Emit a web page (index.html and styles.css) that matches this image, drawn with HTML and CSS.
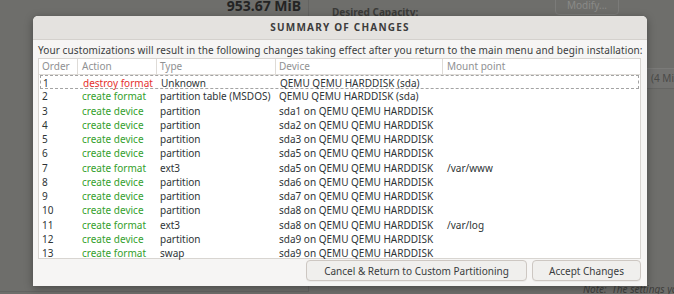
FILE: index.html
```html
<!DOCTYPE html>
<html lang="en">
<head>
  <meta charset="UTF-8">
  <title>Summary of Changes</title>
  <link rel="stylesheet" href="styles.css">
</head>
<body>
  <div class="backdrop">
    <div class="left-pane">
      <div class="capacity">953.67 MiB</div>
    </div>
    <div class="right-pane">
      <div class="top-row">
        <span class="desired">Desired Capacity:</span>
        <span class="modify">Modify...</span>
      </div>
      <div class="size-row">(4 MiB)</div>
      <div class="note">Note:&nbsp; The settings you make</div>
    </div>
  </div>

  <div class="dialog">
    <div class="dialog-title">SUMMARY OF CHANGES</div>
    <div class="dialog-body">
      <p class="intro">Your customizations will result in the following changes taking effect after you return to the main menu and begin installation:</p>
      <div class="changes">
        <div class="row head">
          <span class="c-order">Order</span>
          <span class="c-action">Action</span>
          <span class="c-type">Type</span>
          <span class="c-device">Device</span>
          <span class="c-mount">Mount point</span>
        </div>
        <div class="row focus">
          <span class="c-order">1</span>
          <span class="c-action destroy">destroy format</span>
          <span class="c-type">Unknown</span>
          <span class="c-device">QEMU QEMU HARDDISK (sda)</span>
          <span class="c-mount"></span>
        </div>
        <div class="row">
          <span class="c-order">2</span>
          <span class="c-action create">create format</span>
          <span class="c-type">partition table (MSDOS)</span>
          <span class="c-device">QEMU QEMU HARDDISK (sda)</span>
          <span class="c-mount"></span>
        </div>
        <div class="row">
          <span class="c-order">3</span>
          <span class="c-action create">create device</span>
          <span class="c-type">partition</span>
          <span class="c-device">sda1 on QEMU QEMU HARDDISK</span>
          <span class="c-mount"></span>
        </div>
        <div class="row">
          <span class="c-order">4</span>
          <span class="c-action create">create device</span>
          <span class="c-type">partition</span>
          <span class="c-device">sda2 on QEMU QEMU HARDDISK</span>
          <span class="c-mount"></span>
        </div>
        <div class="row">
          <span class="c-order">5</span>
          <span class="c-action create">create device</span>
          <span class="c-type">partition</span>
          <span class="c-device">sda3 on QEMU QEMU HARDDISK</span>
          <span class="c-mount"></span>
        </div>
        <div class="row">
          <span class="c-order">6</span>
          <span class="c-action create">create device</span>
          <span class="c-type">partition</span>
          <span class="c-device">sda5 on QEMU QEMU HARDDISK</span>
          <span class="c-mount"></span>
        </div>
        <div class="row">
          <span class="c-order">7</span>
          <span class="c-action create">create format</span>
          <span class="c-type">ext3</span>
          <span class="c-device">sda5 on QEMU QEMU HARDDISK</span>
          <span class="c-mount">/var/www</span>
        </div>
        <div class="row">
          <span class="c-order">8</span>
          <span class="c-action create">create device</span>
          <span class="c-type">partition</span>
          <span class="c-device">sda6 on QEMU QEMU HARDDISK</span>
          <span class="c-mount"></span>
        </div>
        <div class="row">
          <span class="c-order">9</span>
          <span class="c-action create">create device</span>
          <span class="c-type">partition</span>
          <span class="c-device">sda7 on QEMU QEMU HARDDISK</span>
          <span class="c-mount"></span>
        </div>
        <div class="row">
          <span class="c-order">10</span>
          <span class="c-action create">create device</span>
          <span class="c-type">partition</span>
          <span class="c-device">sda8 on QEMU QEMU HARDDISK</span>
          <span class="c-mount"></span>
        </div>
        <div class="row">
          <span class="c-order">11</span>
          <span class="c-action create">create format</span>
          <span class="c-type">ext3</span>
          <span class="c-device">sda8 on QEMU QEMU HARDDISK</span>
          <span class="c-mount">/var/log</span>
        </div>
        <div class="row">
          <span class="c-order">12</span>
          <span class="c-action create">create device</span>
          <span class="c-type">partition</span>
          <span class="c-device">sda9 on QEMU QEMU HARDDISK</span>
          <span class="c-mount"></span>
        </div>
        <div class="row">
          <span class="c-order">13</span>
          <span class="c-action create">create format</span>
          <span class="c-type">swap</span>
          <span class="c-device">sda9 on QEMU QEMU HARDDISK</span>
          <span class="c-mount"></span>
        </div>
      </div>
      <div class="buttons">
        <button class="btn-cancel">Cancel &amp; Return to Custom Partitioning</button>
        <button class="btn-accept">Accept Changes</button>
      </div>
    </div>
  </div>
</body>
</html>
```

FILE: styles.css
```css
body {
  margin: 0;
  width: 674px;
  height: 294px;
  overflow: hidden;
  background-color: #6e6e6b;
  font-family: 'Noto Sans', 'DejaVu Sans', sans-serif;
  font-size: 10px;
  color: #2e3436;
}

/* dimmed installer screen behind the dialog */
.backdrop {
  display: flex;
  height: 294px;
  color: #3a3a38;
}

.left-pane {
  width: 309px;
  border-right: 1px solid #636361;
  border-bottom: 1px solid #636361;
  height: 292px;
  box-sizing: border-box;
}

.capacity {
  text-align: right;
  padding-right: 7px;
  margin-top: -4px;
  font-size: 14px;
  font-weight: bold;
  color: #242424;
}

.right-pane {
  flex: 1;
  display: flex;
  flex-direction: column;
  overflow: hidden;
}

.top-row {
  display: flex;
  justify-content: space-between;
  padding: 0 55px 0 23px;
  height: 20px;
}

.desired {
  margin-top: 5px;
  font-weight: bold;
  font-size: 10px;
  color: #3b3b39;
}

.modify {
  margin-top: -5px;
  height: 20px;
  width: 64px;
  border: 1px solid #7b7b79;
  border-radius: 4px;
  color: #8a8a88;
  text-align: center;
  line-height: 18px;
  box-sizing: border-box;
}

.size-row {
  margin-top: 48px;
  height: 19px;
  line-height: 19px;
  padding-left: 342px;
  white-space: nowrap;
  background-color: #727270;
  border-top: 1px solid #7a7a78;
  border-bottom: 1px solid #656563;
  color: #4a4a48;
}

.note {
  margin-top: auto;
  padding-left: 274px;
  white-space: nowrap;
  font-style: italic;
  color: #3e3e3c;
  height: 10px;
  line-height: 10px;
}

/* the dialog */
.dialog {
  position: absolute;
  left: 33px;
  top: 16px;
  width: 614px;
  height: 270px;
  background-color: #f6f5f4;
  border-radius: 5px 5px 0 0;
  box-shadow: 0 2px 8px rgba(0, 0, 0, 0.35);
  display: flex;
  flex-direction: column;
}

.dialog-title {
  height: 23px;
  line-height: 23px;
  text-align: center;
  background-color: #e4e2df;
  border-bottom: 1px solid #d4d1cd;
  border-radius: 5px 5px 0 0;
  font-weight: bold;
  font-size: 10px;
  letter-spacing: 1.2px;
  color: #3c3c3c;
}

.dialog-body {
  flex: 1;
  padding: 0 6px 0 5px;
  display: flex;
  flex-direction: column;
}

.intro {
  margin: 2px 0 0 0;
  height: 16px;
  line-height: 16px;
  letter-spacing: 0.1px;
  white-space: nowrap;
  color: #3b3d3e;
}

.changes {
  background-color: #fff;
  border: 1px solid #d8d5d1;
  height: 201px;
  box-sizing: border-box;
}

.row {
  display: flex;
  height: 14.25px;
  line-height: 14px;
  box-sizing: border-box;
  white-space: nowrap;
}

.row.head {
  height: 16px;
  line-height: 15px;
  color: #8f9193;
  border-bottom: 1px solid #dedbd7;
}

.row.head span {
  border-right: 1px solid #dedbd7;
}

.row.head .c-mount {
  border-right: none;
}

.row.focus {
  margin: 0 1px;
  border: 1px dashed #a3a3a3;
}

.row.focus .c-order {
  width: 38px;
  padding-left: 2px;
}

.c-order {
  width: 39px;
  padding-left: 3px;
  box-sizing: border-box;
}

.c-action {
  width: 79px;
  padding-left: 4px;
  box-sizing: border-box;
}

.c-type {
  width: 119px;
  padding-left: 3px;
  box-sizing: border-box;
}

.c-device {
  width: 167px;
  padding-left: 3px;
  box-sizing: border-box;
}

.c-mount {
  flex: 1;
  padding-left: 4px;
}

.destroy {
  color: #e5302d;
}

.create {
  color: #33a02c;
}

.buttons {
  display: flex;
  justify-content: flex-end;
  gap: 5px;
  margin-top: 1px;
}

button {
  height: 21px;
  font-family: inherit;
  font-size: 10px;
  color: #3a3d3e;
  background-color: #f0efed;
  border: 1px solid #cdc7c2;
  border-radius: 4px;
  box-shadow: 0 1px 0 rgba(0, 0, 0, 0.04);
  padding: 0;
}

.btn-cancel {
  width: 221px;
}

.btn-accept {
  width: 109px;
}
```
